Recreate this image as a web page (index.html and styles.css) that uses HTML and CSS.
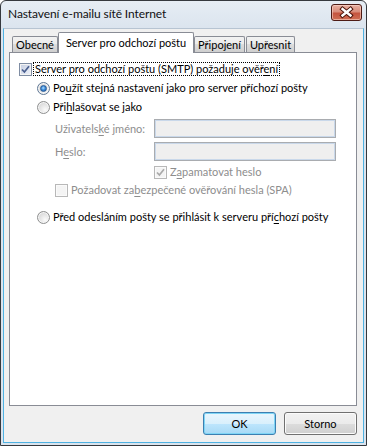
FILE: index.html
```html
<!DOCTYPE html>
<html lang="cs">
<head>
  <meta charset="UTF-8">
  <title>Nastavení e-mailu sítě Internet</title>
  <link rel="stylesheet" href="styles.css">
</head>
<body>
  <div class="window">
    <div class="titlebar">
      <span class="title">Nastavení e-mailu sítě Internet</span>
      <div class="close">
        <svg width="31" height="17" viewBox="0 0 31 17">
          <path d="M11.5 5 L19.5 11.5 M19.5 5 L11.5 11.5" stroke="#4a1208" stroke-width="4.4" stroke-linecap="square" fill="none"/>
          <path d="M11.5 5 L19.5 11.5 M19.5 5 L11.5 11.5" stroke="#ffffff" stroke-width="2.4" stroke-linecap="square" fill="none"/>
        </svg>
      </div>
    </div>

    <div class="client">
      <div class="tabs">
        <div class="tab tab-general">Obecné</div>
        <div class="tab tab-smtp active">Server pro odchozí poštu</div>
        <div class="tab tab-conn">Připojení</div>
        <div class="tab tab-adv">Upřesnit</div>
      </div>

      <div class="panel">
        <div class="row">
          <span class="box checked">
            <svg width="9" height="9" viewBox="0 0 9 9"><path d="M1 4.5 L3.4 7 L8 1.2" stroke="#4a5f8f" stroke-width="1.7" fill="none"/></svg>
          </span>
          <span class="text focus">Server pro odchozí poštu (SMTP) požaduje ověř<u>e</u>ní</span>
        </div>

        <div class="row option gap-3">
          <span class="radio selected"><span class="dot"></span></span>
          <span class="text">Po<u>u</u>žít stejná nastavení jako pro server příchozí pošty</span>
        </div>

        <div class="row option gap-3">
          <span class="radio"></span>
          <span class="text">Při<u>h</u>lašovat se jako</span>
        </div>

        <div class="field gap-4">
          <span class="field-label">Uživatels<u>k</u>é jméno:</span>
          <span class="input"></span>
        </div>

        <div class="field gap-4">
          <span class="field-label">H<u>e</u>slo:</span>
          <span class="input"></span>
        </div>

        <div class="row remember gap-3">
          <span class="box disabled">
            <svg width="9" height="9" viewBox="0 0 9 9"><path d="M1 4.5 L3.4 7 L8 1.2" stroke="#a9a9a9" stroke-width="1.7" fill="none"/></svg>
          </span>
          <span class="text muted">Z<u>a</u>pamatovat heslo</span>
        </div>

        <div class="row sub gap-2">
          <span class="box disabled"></span>
          <span class="text muted">Požadovat za<u>b</u>ezpečené ověřování hesla (SPA)</span>
        </div>

        <div class="row option gap-11">
          <span class="radio"></span>
          <span class="text">Před odesláním pošty se přihlásit k serveru pří<u>c</u>hozí pošty</span>
        </div>
      </div>

      <div class="buttons">
        <div class="btn default">OK</div>
        <div class="btn">Storno</div>
      </div>
    </div>
  </div>
</body>
</html>
```

FILE: styles.css
```css
* {
  box-sizing: border-box;
}

body {
  margin: 0;
  font-family: Lato, "Open Sans", sans-serif;
  font-size: 11px;
  color: #000;
  background: #fff;
}

u {
  text-decoration-thickness: 1px;
  text-underline-offset: 2px;
}

/* window frame */
.window {
  width: 367px;
  height: 446px;
  display: flex;
  flex-direction: column;
  border: 1px solid #35393e;
  border-radius: 6px 6px 0 0;
  background: linear-gradient(#e6edf4, #dbe4ee 28px, #dbe4ee);
  padding: 0 2px 2px;
}

.titlebar {
  height: 27px;
  display: flex;
  justify-content: space-between;
  padding: 3px 2px 0 5px;
}

.title {
  padding-top: 1px;
  font-size: 12px;
  letter-spacing: -0.1px;
  line-height: 17px;
  color: #111;
}

.close {
  width: 31px;
  height: 17px;
  border: 1px solid #4d1b15;
  border-radius: 3px;
  background: linear-gradient(#e8b0a2, #d98d7b 45%, #c5543e 55%, #cf6f55);
  box-shadow: inset 0 0 0 1px rgba(255, 220, 210, 0.55);
}

.close svg {
  display: block;
  margin: -1px;
}

.client {
  flex: 1;
  display: flex;
  flex-direction: column;
  background: #f0f0f0;
  border: 1px solid #4fb2e2;
  border-top-color: #b7c4d2;
  padding: 3px 6px 7px 5px;
}

/* tabs */
.tabs {
  height: 20px;
  display: flex;
  align-items: flex-end;
  padding-left: 3px;
}

.tab {
  height: 16px;
  border: 1px solid #898c95;
  border-bottom: none;
  border-radius: 2px 2px 0 0;
  background: linear-gradient(#f2f2f2, #ebebeb 50%, #dddddd 50%, #cfcfcf);
  line-height: 15px;
  text-align: center;
  white-space: nowrap;
}

.tab-general { width: 46px; }
.tab-smtp { width: 136px; }
.tab-conn { width: 51px; }
.tab-adv { width: 49px; margin-left: 1px; }

.tab.active {
  height: 21px;
  background: #fff;
  line-height: 19px;
  margin-bottom: -1px;
  position: relative;
  z-index: 1;
}

.panel {
  flex: 1;
  border: 1px solid #898c95;
  background: #fff;
  padding: 8px 8px 0 9px;
}

/* rows */
.row {
  height: 16px;
  display: flex;
  align-items: center;
}

.option { margin-left: 18px; }
.sub { margin-left: 36px; }
.remember { margin-left: 135px; }

.gap-2 { margin-top: 2px; }
.gap-3 { margin-top: 3px; }
.gap-4 { margin-top: 4px; }
.gap-11 { margin-top: 11px; }

.text {
  margin-left: 1px;
  padding: 0 1px;
  border: 1px solid transparent;
  line-height: 12px;
  white-space: nowrap;
}

.text.focus {
  border: 1px dotted #000;
}

.muted {
  color: #8d8d8d;
}

/* checkbox */
.box {
  width: 13px;
  height: 13px;
  flex: none;
  display: flex;
  align-items: center;
  justify-content: center;
  border: 1px solid #8e8f8f;
  background: linear-gradient(135deg, #cfd3d9, #f6f6f6);
  box-shadow: inset 0 0 0 1px #f4f4f4;
}

.box.checked {
  border-color: #7f8da3;
  background: linear-gradient(135deg, #c4cde0, #f0f3fa);
}

.box.disabled {
  border-color: #b8b8b8;
  background: #f4f4f4;
  box-shadow: inset 0 0 0 1px #fafafa;
}

/* radio */
.radio {
  width: 13px;
  height: 13px;
  flex: none;
  display: flex;
  align-items: center;
  justify-content: center;
  border: 1px solid #8e8f8f;
  border-radius: 50%;
  background: radial-gradient(circle at 65% 70%, #fbfbfb, #e1e1e1 55%, #cfcfcf);
  box-shadow: inset 0 0 0 1px #f6f6f6;
}

.radio.selected {
  border-color: #5f7896;
}

.dot {
  width: 7px;
  height: 7px;
  border-radius: 50%;
  background: radial-gradient(circle at 45% 40%, #b6e0ff, #3e8fdc 45%, #1a4f9c);
  border: 1px solid #2a5a94;
}

/* text fields */
.field {
  height: 19px;
  display: flex;
  align-items: center;
  margin-left: 36px;
}

.field-label {
  width: 99px;
  color: #8d8d8d;
  white-space: nowrap;
}

.input {
  width: 182px;
  height: 19px;
  border: 1px solid #a9acb0;
  background: #efefef;
  box-shadow: inset 0 0 0 1px #c9d8ea;
}

/* dialog buttons */
.buttons {
  display: flex;
  justify-content: flex-end;
  gap: 8px;
  padding-top: 6px;
}

.btn {
  width: 73px;
  height: 23px;
  display: flex;
  align-items: center;
  justify-content: center;
  border: 1px solid #707070;
  border-radius: 3px;
  background: linear-gradient(#f2f2f2, #ebebeb 50%, #dddddd 50%, #cfcfcf);
  box-shadow: inset 0 0 0 1px #fbfbfb;
}

.btn.default {
  border-color: #3c7fb1;
  background: linear-gradient(#eaf6fd, #d9f0fc 50%, #bee6fd 50%, #a7d9f5);
  box-shadow: inset 0 0 0 1px #7fd5f5;
}
```
